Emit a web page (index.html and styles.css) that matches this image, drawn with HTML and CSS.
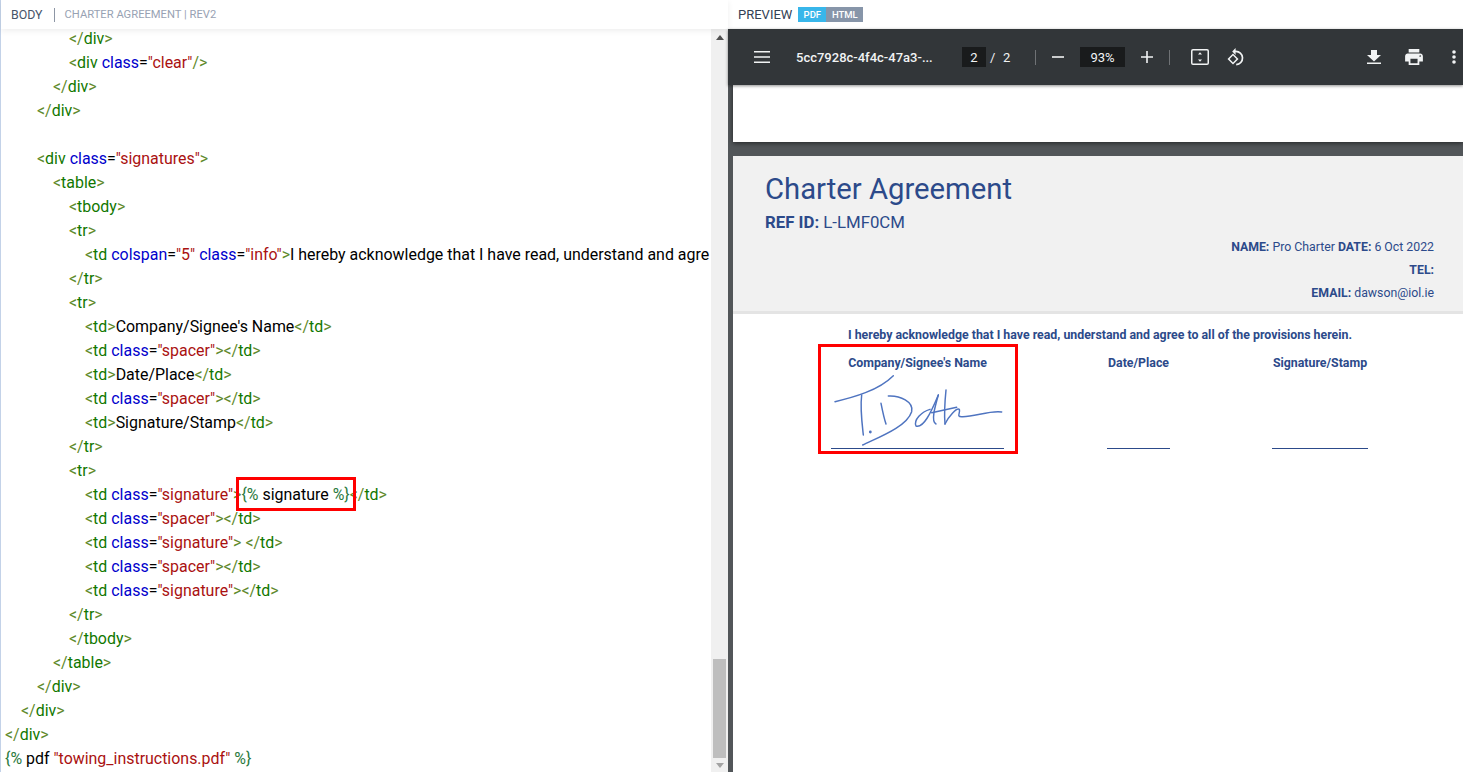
FILE: index.html
```html
<!DOCTYPE html>
<html lang="en">
<head>
<meta charset="utf-8">
<title>Charter Agreement</title>
<link rel="stylesheet" href="styles.css">
</head>
<body>
<div class="app">
  <section class="editor">
    <header class="pane-head editor-head">
      <span class="head-title">BODY</span>
      <span class="head-sep"></span>
      <span class="head-sub">CHARTER AGREEMENT | REV2</span>
    </header>
    <div class="editor-body">
      <div class="code">
        <div class="ln i4"><b>&lt;/</b><i>div</i><b>&gt;</b></div>
        <div class="ln i4"><b>&lt;</b><i>div</i> <u>class</u>=<s>"clear"</s><b>/&gt;</b></div>
        <div class="ln i3"><b>&lt;/</b><i>div</i><b>&gt;</b></div>
        <div class="ln i2"><b>&lt;/</b><i>div</i><b>&gt;</b></div>
        <div class="ln i0">&nbsp;</div>
        <div class="ln i2"><b>&lt;</b><i>div</i> <u>class</u>=<s>"signatures"</s><b>&gt;</b></div>
        <div class="ln i3"><b>&lt;</b><i>table</i><b>&gt;</b></div>
        <div class="ln i4"><b>&lt;</b><i>tbody</i><b>&gt;</b></div>
        <div class="ln i4"><b>&lt;</b><i>tr</i><b>&gt;</b></div>
        <div class="ln i5"><b>&lt;</b><i>td</i> <u>colspan</u>=<s>"5"</s> <u>class</u>=<s>"info"</s><b>&gt;</b>I hereby acknowledge that I have read, understand and agre</div>
        <div class="ln i4"><b>&lt;/</b><i>tr</i><b>&gt;</b></div>
        <div class="ln i4"><b>&lt;</b><i>tr</i><b>&gt;</b></div>
        <div class="ln i5"><b>&lt;</b><i>td</i><b>&gt;</b>Company/Signee's Name<b>&lt;/</b><i>td</i><b>&gt;</b></div>
        <div class="ln i5"><b>&lt;</b><i>td</i> <u>class</u>=<s>"spacer"</s><b>&gt;&lt;/</b><i>td</i><b>&gt;</b></div>
        <div class="ln i5"><b>&lt;</b><i>td</i><b>&gt;</b>Date/Place<b>&lt;/</b><i>td</i><b>&gt;</b></div>
        <div class="ln i5"><b>&lt;</b><i>td</i> <u>class</u>=<s>"spacer"</s><b>&gt;&lt;/</b><i>td</i><b>&gt;</b></div>
        <div class="ln i5"><b>&lt;</b><i>td</i><b>&gt;</b>Signature/Stamp<b>&lt;/</b><i>td</i><b>&gt;</b></div>
        <div class="ln i4"><b>&lt;/</b><i>tr</i><b>&gt;</b></div>
        <div class="ln i4"><b>&lt;</b><i>tr</i><b>&gt;</b></div>
        <div class="ln i5"><b>&lt;</b><i>td</i> <u>class</u>=<s>"signature"</s><b>&gt;</b><em>{%</em> signature <em>%}</em><b>&lt;/</b><i>td</i><b>&gt;</b></div>
        <div class="ln i5"><b>&lt;</b><i>td</i> <u>class</u>=<s>"spacer"</s><b>&gt;&lt;/</b><i>td</i><b>&gt;</b></div>
        <div class="ln i5"><b>&lt;</b><i>td</i> <u>class</u>=<s>"signature"</s><b>&gt;</b> <b>&lt;/</b><i>td</i><b>&gt;</b></div>
        <div class="ln i5"><b>&lt;</b><i>td</i> <u>class</u>=<s>"spacer"</s><b>&gt;&lt;/</b><i>td</i><b>&gt;</b></div>
        <div class="ln i5"><b>&lt;</b><i>td</i> <u>class</u>=<s>"signature"</s><b>&gt;&lt;/</b><i>td</i><b>&gt;</b></div>
        <div class="ln i4"><b>&lt;/</b><i>tr</i><b>&gt;</b></div>
        <div class="ln i4"><b>&lt;/</b><i>tbody</i><b>&gt;</b></div>
        <div class="ln i3"><b>&lt;/</b><i>table</i><b>&gt;</b></div>
        <div class="ln i2"><b>&lt;/</b><i>div</i><b>&gt;</b></div>
        <div class="ln i1"><b>&lt;/</b><i>div</i><b>&gt;</b></div>
        <div class="ln i0"><b>&lt;/</b><i>div</i><b>&gt;</b></div>
        <div class="ln i0"><em>{%</em> pdf <s>"towing_instructions.pdf"</s> <em>%}</em></div>
      </div>
      <div class="scrollbar">
        <span class="arrow arrow-up"></span>
        <span class="thumb"></span>
        <span class="arrow arrow-down"></span>
      </div>
      <div class="mark mark-code"></div>
    </div>
  </section>

  <section class="preview">
    <header class="pane-head preview-head">
      <span class="head-title preview-title">PREVIEW</span>
      <span class="toggle"><span class="toggle-pdf">PDF</span><span class="toggle-html">HTML</span></span>
    </header>
    <div class="viewer">
      <div class="toolbar">
        <svg class="ico menu" viewBox="0 0 16 12"><path d="M0 0h16v1.6H0zM0 5.2h16v1.6H0zM0 10.4h16V12H0z"/></svg>
        <span class="file">5cc7928c-4f4c-47a3-...</span>
        <span class="field page-field">2</span>
        <span class="slash">/</span>
        <span class="total">2</span>
        <span class="tsep sep-a"></span>
        <svg class="ico minus" viewBox="0 0 12 12"><path d="M0 5.2h12v1.6H0z"/></svg>
        <span class="field zoom-field">93%</span>
        <svg class="ico plus" viewBox="0 0 12 12"><path d="M5.2 0h1.6v5.2H12v1.6H6.8V12H5.2V6.8H0V5.2h5.2z"/></svg>
        <span class="tsep sep-b"></span>
        <svg class="ico fit" viewBox="0 0 18 16"><path fill-rule="evenodd" d="M2 0h14a2 2 0 0 1 2 2v12a2 2 0 0 1-2 2H2a2 2 0 0 1-2-2V2a2 2 0 0 1 2-2zm0 1.5a.5.5 0 0 0-.5.5v12a.5.5 0 0 0 .5.5h14a.5.5 0 0 0 .5-.5V2a.5.5 0 0 0-.5-.5z"/><path d="M9 3.2 11 5.6H7zM9 12.8 7 10.4h4z"/></svg>
        <svg class="ico rotate" viewBox="0 0 18 18"><path fill-rule="evenodd" d="M6 5.5 11.5 11 6 16.5.5 11zM6 7.6 2.6 11 6 14.4 9.4 11z"/><path d="M8.6 0v2.6a7.4 7.4 0 0 1 .7 14.8l-.2-1.6a5.8 5.8 0 0 0-.5-11.6V7L5.2 3.5z"/></svg>
        <svg class="ico download" viewBox="0 0 14 14"><path d="M14 5h-4V0H4v5H0l7 6.4zM0 12.4h14V14H0z"/></svg>
        <svg class="ico print" viewBox="2 3 20 18"><path d="M19 8H5c-1.66 0-3 1.34-3 3v6h4v4h12v-4h4v-6c0-1.66-1.34-3-3-3zm-3 11H8v-5h8v5zm3-7c-.55 0-1-.45-1-1s.45-1 1-1 1 .45 1 1-.45 1-1 1zm-1-9H6v4h12V3z"/></svg>
        <svg class="ico more" viewBox="0 0 4 14"><circle cx="2" cy="2" r="1.8"/><circle cx="2" cy="7" r="1.8"/><circle cx="2" cy="12" r="1.8"/></svg>
      </div>
      <div class="pages">
        <div class="page-end"></div>
        <div class="page">
          <div class="doc-head">
            <h1 class="doc-title">Charter Agreement</h1>
            <p class="doc-ref"><strong>REF ID:</strong> L-LMF0CM</p>
            <div class="doc-meta">
              <p><strong>NAME:</strong> Pro Charter <strong>DATE:</strong> 6 Oct 2022</p>
              <p><strong>TEL:</strong></p>
              <p><strong>EMAIL:</strong> dawson@iol.ie</p>
            </div>
          </div>
          <p class="ack">I hereby acknowledge that I have read, understand and agree to all of the provisions herein.</p>
          <div class="sign-grid">
            <div class="sign-col col-a">
              <span class="sign-label">Company/Signee's Name</span>
              <div class="sign-line">
                <svg class="signature" viewBox="63 150 519 237" fill="none" stroke="#4f74c0" stroke-linecap="round" stroke-linejoin="round" stroke-width="4.4">
                  <path d="M75 245C130 232 205 212 250 167"/>
                  <path d="M155 225C150 265 156 310 160 345"/>
                  <path d="M213 250C218 275 222 295 228 312"/>
                  <circle cx="181" cy="336" r="2"/>
                  <path d="M158 375C210 350 290 320 305 275C312 245 270 226 235 228"/>
                  <path d="M360 268C335 275 310 300 318 318C340 325 362 280 385 225"/>
                  <path d="M385 225C375 260 362 305 378 312"/>
                  <path d="M408 210C405 240 402 280 405 312"/>
                  <path d="M365 278 440 262"/>
                  <path d="M405 312C415 290 440 262 448 268C452 280 438 290 455 290C490 292 540 270 575 276"/>
                </svg>
              </div>
            </div>
            <div class="sign-col col-b">
              <span class="sign-label">Date/Place</span>
              <div class="sign-line"></div>
            </div>
            <div class="sign-col col-c">
              <span class="sign-label">Signature/Stamp</span>
              <div class="sign-line"></div>
            </div>
          </div>
          <div class="mark mark-doc"></div>
        </div>
      </div>
    </div>
  </section>
</div>
</body>
</html>
```
FILE: styles.css
```css
* { box-sizing: border-box; }
html, body { margin: 0; height: 100%; overflow: hidden; background: #fff; }
body { font-family: Roboto, "Liberation Sans", sans-serif; }
p, h1 { margin: 0; font-weight: normal; }

.app { display: grid; grid-template-columns: 728px 735px; height: 772px; }

.editor { display: flex; flex-direction: column; border-left: 1px solid #c3d2e8; min-width: 0; }
.pane-head { height: 29px; display: flex; align-items: center; background: #fff; flex: none; }
.editor-head { padding-left: 10px; box-shadow: 0 2px 6px rgba(0, 0, 0, .07); position: relative; z-index: 2; }
.head-title { font-size: 12.4px; color: #475569; }
.head-sep { width: 1px; height: 14px; background: #8d96a5; margin: 0 10px 0 11px; }
.head-sub { font-size: 11.2px; color: #98a2b3; }

.editor-body { position: relative; flex: 1; display: flex; min-height: 0; }
.code { width: 710px; margin-top: -2px; overflow: hidden; font-size: 15.95px; color: #000; }
.ln { height: 24px; line-height: 24px; white-space: nowrap; }
.ln b { font-weight: normal; color: #5f8a2c; }
.ln i { font-style: normal; color: #170; }
.ln u { text-decoration: none; color: #00c; }
.ln s { text-decoration: none; color: #a11; }
.ln em { font-style: normal; color: #2b7a3e; }
.i0 { padding-left: 4px; }
.i1 { padding-left: 20px; }
.i2 { padding-left: 36px; }
.i3 { padding-left: 52px; }
.i4 { padding-left: 68px; }
.i5 { padding-left: 84px; }

.scrollbar { width: 17px; background: #f0f0f0; display: flex; flex-direction: column; align-items: center; }
.arrow { display: block; width: 0; height: 0; border-left: 4px solid transparent; border-right: 4px solid transparent; }
.arrow-up { border-bottom: 5px solid #505050; margin-top: 6px; }
.thumb { width: 13px; height: 99px; background: #bebebe; margin-top: 619px; }
.arrow-down { border-top: 5px solid #a3a3a3; margin-top: 5px; }

.mark { position: absolute; border: 3px solid #f00; }
.mark-code { left: 235px; top: 448px; width: 120px; height: 34px; }
.mark-doc { left: 85px; top: 188px; width: 200px; height: 110px; }

.preview { display: flex; flex-direction: column; min-width: 0; }
.preview-head { padding-left: 10px; }
.preview-title { color: #334155; font-size: 13px; }
.toggle { display: flex; margin-left: 6px; height: 15px; font-size: 9.5px; font-weight: 500; color: #fff; line-height: 15px; }
.toggle-pdf { width: 28px; text-align: center; background: #38b6ea; }
.toggle-html { width: 37px; text-align: center; background: #8795a9; }

.viewer { flex: 1; display: flex; flex-direction: column; min-height: 0; background: #525659; }
.toolbar { height: 56px; flex: none; display: flex; align-items: center; background: #323639; color: #f1f3f4; box-shadow: 0 1px 3px rgba(0, 0, 0, .45); position: relative; z-index: 2; }
.ico { display: block; fill: #f1f3f4; flex: none; }
.menu { width: 16px; height: 12px; margin-left: 26px; }
.file { font-size: 13px; font-weight: 500; width: 145px; margin-left: 26px; white-space: nowrap; }
.field { display: block; height: 20px; line-height: 21px; background: #191b1c; text-align: center; font-size: 13px; flex: none; }
.page-field { width: 24px; margin-left: 21px; }
.slash { font-size: 13px; margin-left: 4px; width: 5px; }
.total { font-size: 13px; margin-left: 8px; width: 8px; }
.tsep { width: 1px; height: 15px; background: #6f7275; flex: none; }
.sep-a { margin-left: 24px; }
.minus { width: 12px; height: 12px; margin-left: 16px; }
.zoom-field { width: 45px; margin-left: 16px; }
.plus { width: 12px; height: 12px; margin-left: 16px; }
.sep-b { margin-left: 16px; }
.fit { width: 18px; height: 16px; margin-left: 21px; }
.rotate { width: 18px; height: 18px; margin-left: 18px; }
.download { width: 14px; height: 14px; margin-left: 122px; }
.print { width: 18px; height: 16px; margin-left: 24px; }
.more { width: 4px; height: 14px; margin-left: 29px; }

.pages { flex: 1; min-height: 0; overflow: hidden; padding-left: 5px; }
.page-end { height: 57px; background: #fff; box-shadow: 0 1px 5px rgba(0, 0, 0, .6); }
.page { position: relative; margin-top: 14px; height: 640px; background: #fff; color: #2c4a8a; }
.doc-head { height: 158px; background: #f1f1f1; border-bottom: 3px solid #e4e4e4; padding: 16px 29px 0 32px; }
.doc-title { font-size: 29.25px; line-height: 34px; }
.doc-ref { font-size: 16.8px; line-height: 20px; margin-top: 6px; }
.doc-ref strong { font-weight: 700; }
.doc-meta { margin-top: 4px; text-align: right; font-size: 12.3px; line-height: 23px; }
.doc-meta strong { font-weight: 700; }
.ack { font-size: 12.35px; font-weight: 700; text-align: center; line-height: 14px; margin: 14px 0 0 4px; }
.sign-grid { display: flex; margin: 14px 0 0 98px; }
.sign-col { display: flex; flex-direction: column; text-align: center; font-size: 12.35px; font-weight: 700; }
.sign-label { line-height: 14px; white-space: nowrap; }
.sign-line { height: 79px; border-bottom: 1px solid #2c4a8a; }
.col-a { width: 173px; }
.col-b { width: 63px; margin-left: 103px; }
.col-c { width: 96px; margin-left: 102px; }
.signature { display: block; width: 173px; height: 79px; }
```
